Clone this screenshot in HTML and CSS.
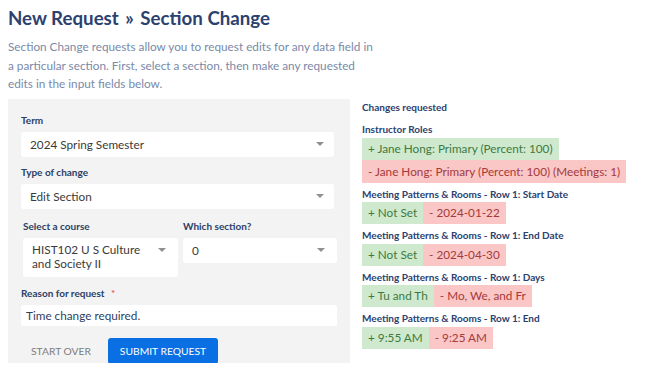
FILE: index.html
```html
<!DOCTYPE html>
<html>
<head>
<meta charset="utf-8">
<link rel="stylesheet" href="styles.css">
</head>
<body>
<div class="page">
  <h1 class="title">New Request <span class="sep">»</span> Section Change</h1>
  <div class="main">
    <div class="left">
      <p class="desc">Section Change requests allow you to request edits for any data field in a particular section. First, select a section, then make any requested edits in the input fields below.</p>
      <div class="panel">
        <div class="field">
          <div class="label">Term</div>
          <div class="select narrow"><span>2024 Spring Semester</span><i class="caret"></i></div>
        </div>
        <div class="field">
          <div class="label">Type of change</div>
          <div class="select narrow"><span>Edit Section</span><i class="caret"></i></div>
        </div>
        <div class="row">
          <div class="field col course">
            <div class="label">Select a course</div>
            <div class="select tall"><span>HIST102 U S Culture and Society II</span><i class="caret"></i></div>
          </div>
          <div class="field col section">
            <div class="label">Which section?</div>
            <div class="select"><span>0</span><i class="caret"></i></div>
          </div>
        </div>
        <div class="field reason">
          <div class="label">Reason for request <span class="req">*</span></div>
          <div class="input">Time change required.</div>
        </div>
        <div class="actions">
          <button class="btn-text">Start Over</button>
          <button class="btn-primary">Submit Request</button>
        </div>
      </div>
    </div>
    <div class="right">
      <div class="heading">Changes requested</div>
      <div class="group first">
        <div class="glabel">Instructor Roles</div>
        <div class="chips col-chips">
          <span class="chip add">+ Jane Hong: Primary (Percent: 100)</span>
          <span class="chip del">- Jane Hong: Primary (Percent: 100) (Meetings: 1)</span>
        </div>
      </div>
      <div class="group">
        <div class="glabel">Meeting Patterns &amp; Rooms - Row 1: Start Date</div>
        <div class="chips"><span class="chip add">+ Not Set</span><span class="chip del">- 2024-01-22</span></div>
      </div>
      <div class="group">
        <div class="glabel">Meeting Patterns &amp; Rooms - Row 1: End Date</div>
        <div class="chips"><span class="chip add">+ Not Set</span><span class="chip del">- 2024-04-30</span></div>
      </div>
      <div class="group">
        <div class="glabel">Meeting Patterns &amp; Rooms - Row 1: Days</div>
        <div class="chips"><span class="chip add">+ Tu and Th</span><span class="chip del">- Mo, We, and Fr</span></div>
      </div>
      <div class="group">
        <div class="glabel">Meeting Patterns &amp; Rooms - Row 1: End</div>
        <div class="chips"><span class="chip add">+ 9:55 AM</span><span class="chip del">- 9:25 AM</span></div>
      </div>
    </div>
  </div>
</div>
</body>
</html>
```

FILE: styles.css
```css
* { box-sizing: border-box; }
html, body { margin: 0; padding: 0; background: #fff; }
body {
  font-family: Lato, "Open Sans", sans-serif;
  width: 650px;
  height: 374px;
  overflow: hidden;
}
.page { padding: 6px 8px 0 8px; }
.title {
  margin: 0;
  font-size: 18.7px;
  line-height: 24px;
  font-weight: 700;
  color: #2b416f;
  white-space: nowrap;
}
.sep { margin: 0 2px; }
.main {
  display: flex;
  gap: 12px;
}
.left { width: 342px; flex: none; }
.desc {
  margin: 8px 0 0 0;
  width: 372px;
  font-size: 11.75px;
  line-height: 18.5px;
  color: #7a89a7;
}
.panel {
  margin-top: 5px;
  background: #f3f3f3;
  padding: 15px 13px 0 13px;
  height: 264px;
  overflow: hidden;
}
.label {
  font-size: 10px;
  font-weight: 700;
  line-height: 13px;
  color: #2b3f66;
  margin-bottom: 5px;
  white-space: nowrap;
}
.req { color: #e04040; margin-left: 4px; font-weight: 400; }
.field + .field { margin-top: 9px; }
.select {
  background: #fff;
  border-radius: 3px;
  height: 25px;
  display: flex;
  align-items: center;
  justify-content: space-between;
  padding: 0 12px 0 9px;
  font-size: 11.75px;
  color: #3a3a3a;
}
.select.narrow { margin-right: 3px; padding-right: 10px; }
.select.tall {
  height: 39px;
  align-items: flex-start;
  padding-top: 5px;
  line-height: 14px;
}
.select.tall span { width: 112px; }
.select.tall .caret { margin-top: 5px; }
.caret {
  width: 0;
  height: 0;
  border-left: 4px solid transparent;
  border-right: 4px solid transparent;
  border-top: 4px solid #909090;
  flex: none;
}
.row {
  display: flex;
  gap: 5px;
  margin-top: 11px;
  padding-left: 2px;
}
.row .field { margin-top: 0; }
.course { width: 155px; }
.section { width: 154px; }
.reason { margin-top: 10px !important; }
.input {
  background: #fff;
  border-radius: 2px;
  height: 21px;
  width: 316px;
  padding: 0 5px;
  font-size: 11.75px;
  line-height: 21px;
  color: #2f3f5f;
}
.actions {
  margin-top: 12px;
  display: flex;
  align-items: center;
}
.btn-text, .btn-primary {
  font-family: Lato, "Open Sans", sans-serif;
  font-size: 10.3px;
  text-transform: uppercase;
  border: none;
  height: 26px;
  border-radius: 3px;
  white-space: nowrap;
  cursor: pointer;
}
.btn-text {
  background: transparent;
  color: #7c7c7c;
  padding: 0 0 0 10px;
  width: 87px;
  text-align: left;
}
.btn-primary {
  background: #0a6fe3;
  color: #fff;
  width: 110px;
  padding: 0;
}
.right {
  padding-top: 71px;
  white-space: nowrap;
}
.heading {
  font-size: 10px;
  font-weight: 700;
  line-height: 13px;
  color: #2b416f;
}
.group { margin-top: 5px; }
.group.first { margin-top: 9px; }
.glabel {
  font-size: 10px;
  font-weight: 700;
  line-height: 13px;
  color: #2b416f;
}
.chips {
  display: flex;
  margin-top: 1.5px;
}
.col-chips {
  flex-direction: column;
  align-items: flex-start;
}
.chip {
  display: inline-block;
  height: 22px;
  line-height: 22px;
  padding: 0 6px;
  font-size: 11.75px;
  white-space: nowrap;
}
.col-chips .chip.del { height: 23px; line-height: 23px; }
.chip.add { background: #cfe9cf; color: #3e7a3e; }
.chip.del { background: #fac6c6; color: #a53a3a; }
```
